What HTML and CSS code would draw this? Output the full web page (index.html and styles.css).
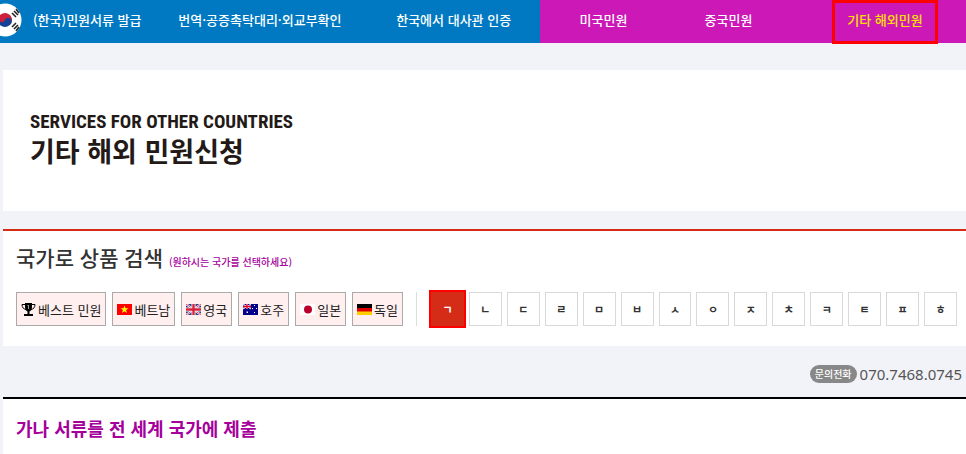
FILE: index.html
```
<!DOCTYPE html>
<html lang="ko">
<head>
    <meta charset="UTF-8">
    <meta name="viewport" content="width=device-width, initial-scale=1.0">
    <title>기타 해외 민원신청</title>
    <link rel="stylesheet" href="styles.css">
</head>
<body>
    <nav class="topnav">
        <div class="nav-group nav-korea">
            <svg class="nav-flag" viewBox="0 0 34 34" aria-hidden="true">
                <circle cx="17" cy="17" r="16.5" fill="#fff"/>
                <g transform="rotate(25 17 17)">
                    <path d="M10 17a7 7 0 0 1 14 0z" fill="#cd1f3c"/>
                    <path d="M10 17a7 7 0 0 0 14 0z" fill="#164295"/>
                    <circle cx="13.5" cy="17" r="3.5" fill="#cd1f3c"/>
                    <circle cx="20.5" cy="17" r="3.5" fill="#164295"/>
                </g>
                <g stroke="#222" stroke-width="1.600">
                    <path d="M24 10l4 4M26 8l4 4M28 6l3 4"/>
                    <path d="M24 24l4-4M26 26l4-4M28 28l3-4"/>
                </g>
            </svg>
            <a href="#">(한국)민원서류 발급</a>
            <a href="#">번역·공증촉탁대리·외교부확인</a>
            <a href="#">한국에서 대사관 인증</a>
        </div>
        <div class="nav-group nav-world">
            <a href="#">미국민원</a>
            <a href="#">중국민원</a>
            <a href="#" class="current">기타 해외민원</a>
        </div>
    </nav>

    <main class="content">
        <header class="hero">
            <p class="hero-sub">SERVICES FOR OTHER COUNTRIES</p>
            <h1>기타 해외 민원신청</h1>
        </header>

        <section class="search">
            <h2>국가로 상품 검색 <small>(원하시는 국가를 선택하세요)</small></h2>
            <div class="filters">
                <div class="countries">
                    <button type="button">
                        <svg class="trophy" viewBox="0 0 15 15" aria-hidden="true">
                            <path d="M4 1h7v4c0 3-1.500 4-2.500 4.500V12H12v2H3v-2h3.500V9.500C5.500 9 4 8 4 5z"/>
                            <path d="M4 2.500H1c0 3 1.500 4.500 4 5M11 2.500h3c0 3-1.500 4.500-4 5" fill="none" stroke="#000"/>
                            <path d="M6.500 4l1-1v4" fill="none" stroke="#999"/>
                        </svg>
                        베스트 민원
                    </button>
                    <button type="button">
                        <svg class="flag" viewBox="0 0 15 11" aria-hidden="true">
                            <path d="M0 0h15v11H0z" fill="#f00"/>
                            <path d="M7.500 1.500l1 2.800h3L9.100 6.100l.9 3-2.500-1.800L5 9.100l.9-3-2.400-1.800h3z" fill="#ff0"/>
                        </svg>
                        베트남
                    </button>
                    <button type="button">
                        <svg class="flag" viewBox="0 0 15 11" aria-hidden="true">
                            <path d="M0 0h15v11H0z" fill="#2b3f86"/>
                            <path d="M0 0l15 11M15 0L0 11" stroke="#fff" stroke-width="2"/>
                            <path d="M0 0l15 11M15 0L0 11" stroke="#d8203c" stroke-width=".8"/>
                            <path d="M7.500 0v11M0 5.500h15" stroke="#fff" stroke-width="4"/>
                            <path d="M7.500 0v11M0 5.500h15" stroke="#d8203c" stroke-width="2.400"/>
                        </svg>
                        영국
                    </button>
                    <button type="button">
                        <svg class="flag" viewBox="0 0 15 11" aria-hidden="true">
                            <path d="M0 0h15v11H0z" fill="#00008b"/>
                            <path d="M0 0l8 5M8 0L0 5" stroke="#fff"/>
                            <path d="M4 0v5M0 2.500h8" stroke="#fff" stroke-width="2"/>
                            <path d="M4 0v5M0 2.500h8" stroke="#e00020" stroke-width="1.400"/>
                            <path d="M3.500 7.500H5V9H3.500zM11 1h1v1h-1zM9 4h1v1H9zM13 4h1v1h-1zM11 8h1v1h-1z" fill="#fff"/>
                        </svg>
                        호주
                    </button>
                    <button type="button">
                        <svg class="flag" viewBox="0 0 15 11" aria-hidden="true">
                            <path d="M0 0h15v11H0z" fill="#fff"/>
                            <circle cx="8" cy="5.500" r="4" fill="#bc002d"/>
                        </svg>
                        일본
                    </button>
                    <button type="button">
                        <svg class="flag" viewBox="0 0 15 11" aria-hidden="true">
                            <path d="M0 0h15v4H0z" fill="#000"/>
                            <path d="M0 4h15v4H0z" fill="#d00"/>
                            <path d="M0 7.500h15V11H0z" fill="#ffce00"/>
                        </svg>
                        독일
                    </button>
                </div>
                <div class="letters">
                    <button type="button" class="active">ㄱ</button>
                    <button type="button">ㄴ</button>
                    <button type="button">ㄷ</button>
                    <button type="button">ㄹ</button>
                    <button type="button">ㅁ</button>
                    <button type="button">ㅂ</button>
                    <button type="button">ㅅ</button>
                    <button type="button">ㅇ</button>
                    <button type="button">ㅈ</button>
                    <button type="button">ㅊ</button>
                    <button type="button">ㅋ</button>
                    <button type="button">ㅌ</button>
                    <button type="button">ㅍ</button>
                    <button type="button">ㅎ</button>
                </div>
            </div>
        </section>

        <p class="contact"><span class="badge">문의전화</span> <a href="tel:07074680745">070.7468.0745</a></p>

        <section class="result">
            <h3>가나 서류를 전 세계 국가에 제출</h3>
        </section>
    </main>
</body>
</html>
```
FILE: styles.css
```
* {
    box-sizing: border-box;
}

body {
    font-family: "Noto Sans CJK KR", sans-serif;
    background-color: #f2f3f8;
    color: #333;
    margin: 0;
}

h1, h2, h3, p {
    margin: 0;
}

a {
    color: inherit;
    text-decoration: none;
}

button {
    font-family: inherit;
    cursor: pointer;
}

.topnav {
    display: grid;
    grid-template-columns: 540fr 426fr;
    height: 43px;
    color: #fff;
    font-size: 13px;
    font-weight: 500;
    white-space: nowrap;
}

.nav-group {
    display: grid;
    align-items: center;
    justify-items: center;
    height: 43px;
    padding-bottom: 4px;
}

.nav-korea {
    grid-template-columns: 22px 130fr 214fr 172fr;
    background-color: #0079c2;
}

.nav-flag {
    width: 34px;
    height: 34px;
    justify-self: end;
}

.nav-world {
    grid-template-columns: 127fr 123fr 176fr;
    background-color: #cb18b7;
}

/* the frame hangs 1px below the bar */
.nav-world .current {
    align-self: start;
    justify-self: end;
    width: 106px;
    height: 44px;
    margin-right: 28px;
    margin-bottom: -5px;
    line-height: 34px;
    text-align: center;
    color: #ffe100;
    border: 3px solid #f00;
}

.content {
    margin-left: 3px;
}

.hero {
    margin-top: 27px;
    padding: 41px 27px 42px;
    background-color: #fff;
    color: #231a17;
}

.hero-sub {
    font-family: "Liberation Sans Narrow", "Roboto Condensed", Roboto, sans-serif;
    font-size: 19px;
    font-weight: 700;
    line-height: 22px;
}

.hero h1 {
    font-size: 27px;
    font-weight: 700;
    line-height: 36px;
}

.search {
    margin-top: 18px;
    padding: 10px 9px 20px 13px;
    background-color: #fff;
    border-top: 2px solid #d52c17;
}

.search h2 {
    font-size: 21px;
    font-weight: 500;
    line-height: 32px;
}

.search small {
    font-size: 10px;
    color: #a5009c;
}

.filters {
    display: flex;
    margin-top: 14px;
}

.countries {
    display: flex;
    gap: 6px;
    padding-right: 13px;
    border-right: 1px solid #ddd;
}

.countries button {
    display: flex;
    align-items: center;
    gap: 2px;
    height: 34px;
    padding: 0 4px;
    font-size: 13px;
    color: #222;
    white-space: nowrap;
    background-color: #ffefef;
    border: 1px solid #aaa;
}

.trophy {
    width: 15px;
    height: 15px;
}

.flag {
    width: 15px;
    height: 11px;
}

.letters {
    display: flex;
    flex: 1;
    gap: 5px;
    margin-left: 14px;
}

.letters button {
    flex: 1;
    height: 34px;
    padding: 0;
    font-size: 11px;
    font-weight: 700;
    color: #333;
    background-color: #fff;
    border: 1px solid #d9d9d9;
}

.letters .active {
    color: #fff;
    background-color: #d52c17;
    border-color: #d52c17;
    outline: 2px solid #f00;
}

.contact {
    display: flex;
    justify-content: flex-end;
    align-items: center;
    gap: 3px;
    height: 51px;
    padding: 4px 4px 0 0;
    font-family: "Noto Sans", "Noto Sans CJK KR", sans-serif;
    font-size: 15px;
    color: #555;
}

.badge {
    height: 18px;
    padding: 0 5px;
    font-size: 10px;
    font-weight: 500;
    line-height: 18px;
    color: #fff;
    background-color: #888;
    border-radius: 9px;
}

.result {
    padding: 15px 13px;
    background-color: #fff;
    border-top: 2px solid #000;
}

.result h3 {
    font-size: 18px;
    font-weight: 700;
    line-height: 28px;
    color: #a5009c;
}
```
